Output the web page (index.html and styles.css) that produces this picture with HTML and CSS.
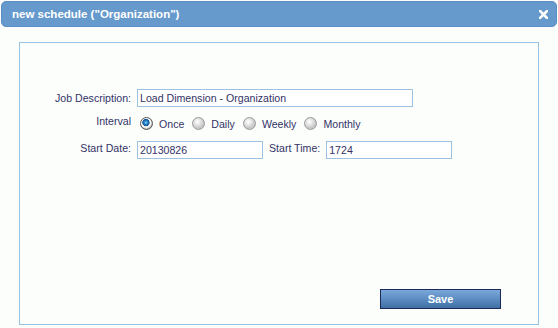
FILE: index.html
```html
<!DOCTYPE html>
<html>
<head>
<meta charset="utf-8">
<link rel="stylesheet" href="styles.css">
</head>
<body>
<div class="dialog">
  <div class="titlebar">
    <span class="title">new schedule ("Organization")</span>
    <svg class="close" width="9" height="9" viewBox="0 0 9 9"><path d="M1 1 L8 8 M8 1 L1 8" stroke="#fff" stroke-width="2.6" stroke-linecap="square"/></svg>
  </div>
  <div class="panel">
    <div class="form">
      <div class="row">
        <label class="label">Job Description:</label>
        <input class="input wide" type="text" value="Load Dimension - Organization">
      </div>
      <div class="row row-interval">
        <span class="label label-top">Interval</span>
        <div class="radios">
          <span class="radio checked"></span><span class="rtext">Once</span>
          <span class="radio"></span><span class="rtext">Daily</span>
          <span class="radio"></span><span class="rtext">Weekly</span>
          <span class="radio"></span><span class="rtext">Monthly</span>
        </div>
      </div>
      <div class="row row-dates">
        <label class="label label-top">Start Date:</label>
        <input class="input short" type="text" value="20130826">
        <label class="label-inline">Start Time:</label>
        <input class="input short" type="text" value="1724">
      </div>
    </div>
    <button class="save">Save</button>
  </div>
</div>
</body>
</html>
```
FILE: styles.css
```css
html, body {
  margin: 0;
  padding: 0;
  background: #fcfefc;
}
body {
  font-family: "Liberation Sans", Arial, sans-serif;
  font-size: 10.6px;
  color: #333366;
}
.dialog {
  width: 556px;
  margin: 1px 0 0 1px;
}
.titlebar {
  height: 26px;
  box-sizing: border-box;
  border: 1px solid #5b8ec6;
  border-radius: 5px;
  background: #6699cc;
  display: flex;
  align-items: center;
  justify-content: space-between;
  padding: 0 8px 0 10px;
}
.title {
  color: #ffffff;
  font-weight: bold;
  font-size: 11.5px;
}
.close {
  display: block;
}
.panel {
  margin: 15px 0 0 18px;
  width: 520px;
  height: 283px;
  box-sizing: border-box;
  border: 1px solid #99c3e3;
  display: flex;
  flex-direction: column;
  justify-content: space-between;
  padding: 46px 37px 15px 0;
}
.row {
  display: flex;
  align-items: center;
}
.row-interval {
  margin-top: 6px;
  height: 20px;
  align-items: flex-start;
}
.row-dates {
  margin-top: 8px;
  align-items: flex-start;
}
.label {
  width: 111px;
  text-align: right;
  margin-right: 6px;
  flex: none;
}
.label-top {
  padding-top: 1px;
}
.row-interval .label-top {
  padding-top: 2px;
}
.label-inline {
  margin: 0 6px 0 6px;
  padding-top: 1px;
}
.input {
  box-sizing: border-box;
  height: 18px;
  border: 1px solid #9dc1e1;
  background: #ffffff;
  padding: 0 2px;
  margin: 0;
  font-family: "Liberation Sans", Arial, sans-serif;
  font-size: 10.6px;
  color: #333366;
  outline: none;
}
.wide {
  width: 276px;
}
.short {
  width: 126px;
}
.radios {
  display: flex;
  align-items: center;
  height: 20px;
  padding-left: 3px;
}
.radio {
  width: 13px;
  height: 13px;
  box-sizing: border-box;
  border-radius: 50%;
  border: 1px solid #9a9a9a;
  background: radial-gradient(circle at 40% 35%, #ffffff 0, #f0f0f0 2px, #c8c8c8 6px);
  margin-right: 6px;
  flex: none;
}
.radio.checked {
  border: 1px solid #555555;
  background: radial-gradient(circle at 45% 42%, #8fd8ff 0, #2a86cc 1.6px, #0f5596 3.4px, #e4e4e4 3.8px, #ffffff 4.6px, #bdbdbd 6px);
}
.rtext {
  margin-right: 8px;
  padding-top: 2px;
}
.save {
  align-self: flex-end;
  width: 121px;
  height: 20px;
  box-sizing: border-box;
  border: 1px solid #1d2a57;
  background: linear-gradient(#7ba8db, #3e71a7);
  color: #ffffff;
  font-family: "Liberation Sans", Arial, sans-serif;
  font-weight: bold;
  font-size: 11px;
  padding: 0;
  margin: 0;
}
```
